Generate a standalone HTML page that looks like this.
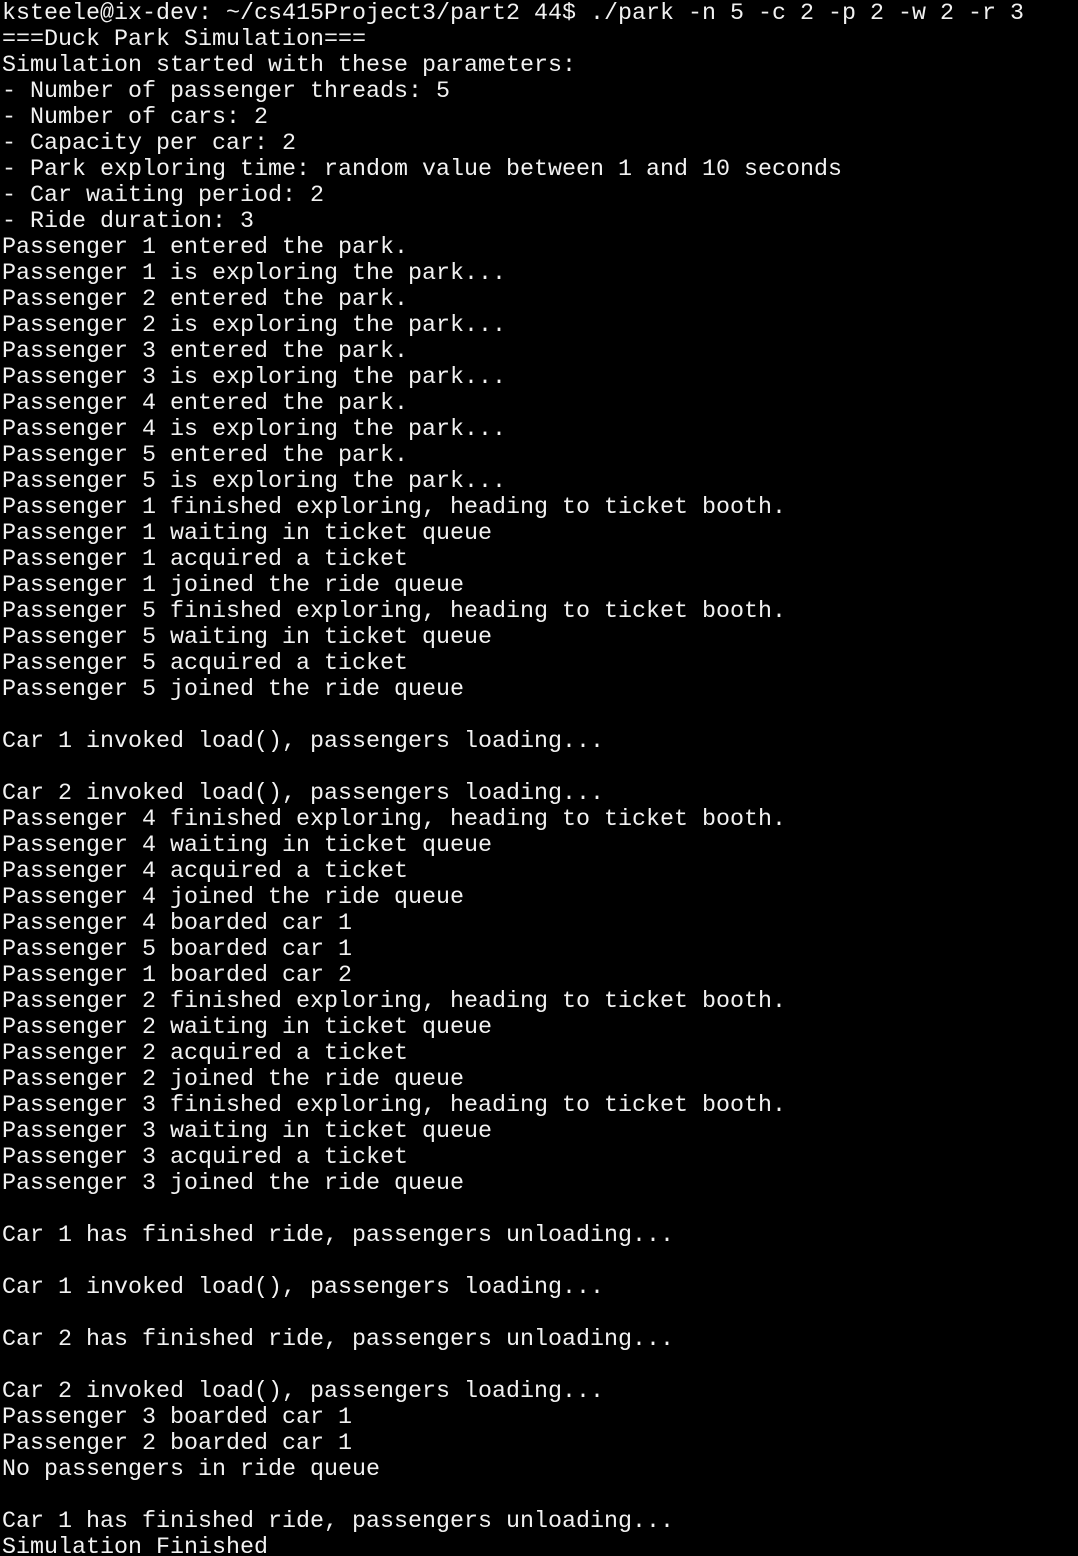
<!DOCTYPE html>
<html><head><meta charset="utf-8"><style>
html,body{margin:0;padding:0;background:#000;width:1078px;height:1556px;overflow:hidden}
pre{margin:0;padding:1px 0 0 2px;font-family:"Liberation Mono",monospace;font-size:23.33px;line-height:26px;color:#f2f2f2;white-space:pre}
</style></head><body><pre>ksteele@ix-dev: ~/cs415Project3/part2 44$ ./park -n 5 -c 2 -p 2 -w 2 -r 3
===Duck Park Simulation===
Simulation started with these parameters:
- Number of passenger threads: 5
- Number of cars: 2
- Capacity per car: 2
- Park exploring time: random value between 1 and 10 seconds
- Car waiting period: 2
- Ride duration: 3
Passenger 1 entered the park.
Passenger 1 is exploring the park...
Passenger 2 entered the park.
Passenger 2 is exploring the park...
Passenger 3 entered the park.
Passenger 3 is exploring the park...
Passenger 4 entered the park.
Passenger 4 is exploring the park...
Passenger 5 entered the park.
Passenger 5 is exploring the park...
Passenger 1 finished exploring, heading to ticket booth.
Passenger 1 waiting in ticket queue
Passenger 1 acquired a ticket
Passenger 1 joined the ride queue
Passenger 5 finished exploring, heading to ticket booth.
Passenger 5 waiting in ticket queue
Passenger 5 acquired a ticket
Passenger 5 joined the ride queue

Car 1 invoked load(), passengers loading...

Car 2 invoked load(), passengers loading...
Passenger 4 finished exploring, heading to ticket booth.
Passenger 4 waiting in ticket queue
Passenger 4 acquired a ticket
Passenger 4 joined the ride queue
Passenger 4 boarded car 1
Passenger 5 boarded car 1
Passenger 1 boarded car 2
Passenger 2 finished exploring, heading to ticket booth.
Passenger 2 waiting in ticket queue
Passenger 2 acquired a ticket
Passenger 2 joined the ride queue
Passenger 3 finished exploring, heading to ticket booth.
Passenger 3 waiting in ticket queue
Passenger 3 acquired a ticket
Passenger 3 joined the ride queue

Car 1 has finished ride, passengers unloading...

Car 1 invoked load(), passengers loading...

Car 2 has finished ride, passengers unloading...

Car 2 invoked load(), passengers loading...
Passenger 3 boarded car 1
Passenger 2 boarded car 1
No passengers in ride queue

Car 1 has finished ride, passengers unloading...
Simulation Finished</pre></body></html>
